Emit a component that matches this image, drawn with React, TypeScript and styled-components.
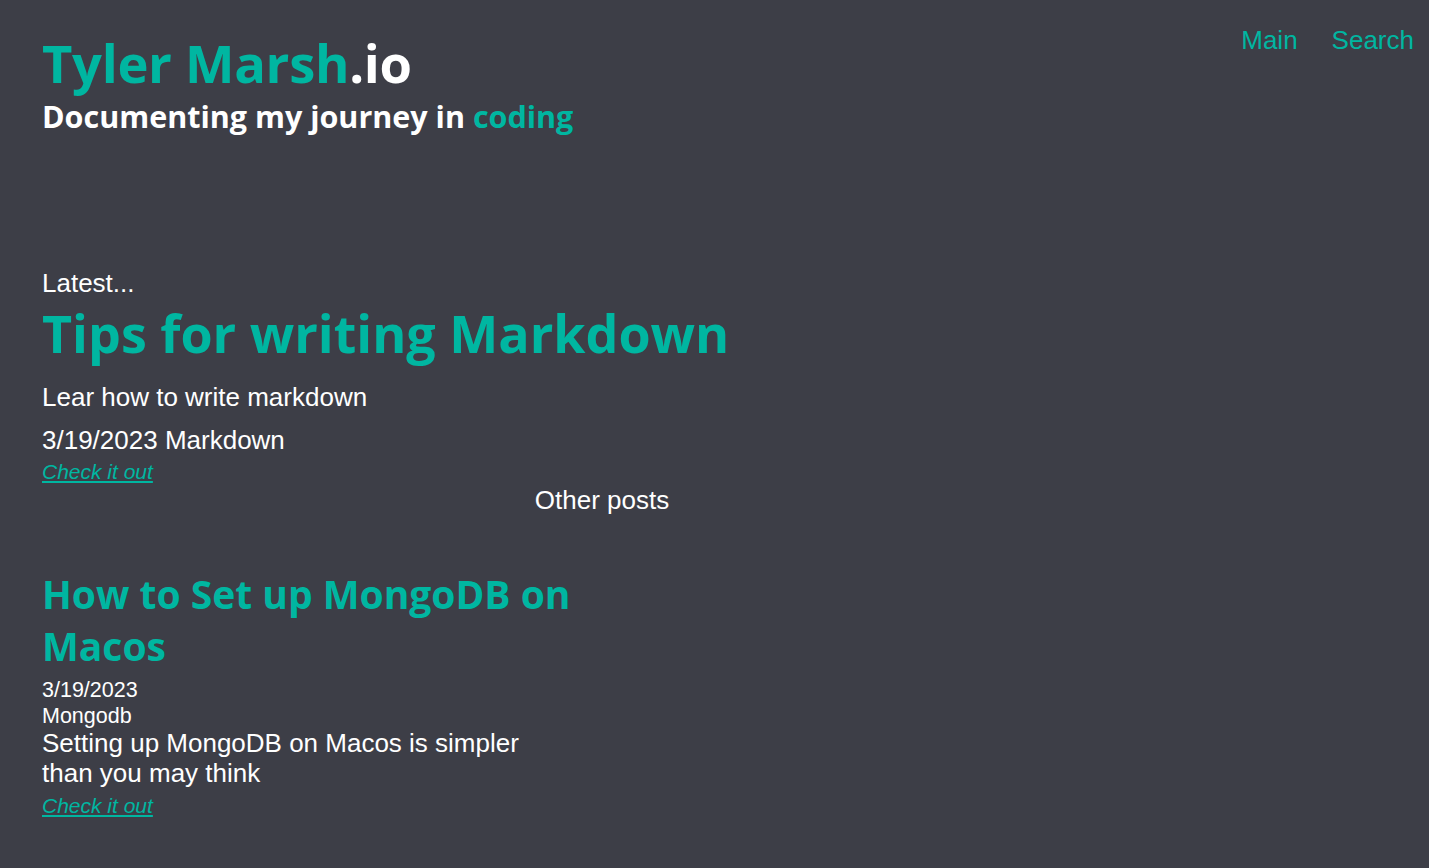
import React from "react";
import styled, { createGlobalStyle } from "styled-components";

const teal = "#00b6a1";

const GlobalStyle = createGlobalStyle`
  html, body {
    margin: 0;
    padding: 0;
    background: #3d3e47;
    min-height: 100%;
  }
  body {
    font-family: "Liberation Sans", Arial, sans-serif;
    color: #ffffff;
  }
`;

const Page = styled.div`
  min-height: 868px;
  background: #3d3e47;
`;

const Header = styled.header`
  display: flex;
  justify-content: space-between;
  align-items: flex-start;
  padding: 25px 15px 0 42px;
`;

const Brand = styled.div`
  padding-top: 8px;
  font-family: "Open Sans", "Noto Sans", sans-serif;
  font-weight: 700;
`;

const SiteTitle = styled.h1`
  margin: 0;
  font-size: 52.5px;
  line-height: 60px;
  color: #ffffff;
  letter-spacing: -0.3px;
`;

const Accent = styled.span`
  color: ${teal};
`;

const Tagline = styled.h2`
  margin: 5px 0 0;
  font-size: 30.5px;
  line-height: 36px;
  color: #ffffff;
`;

const Nav = styled.nav`
  display: flex;
  gap: 34px;
`;

const NavLink = styled.a`
  font-size: 26px;
  line-height: 30px;
  color: ${teal};
  text-decoration: none;
`;

const Main = styled.main`
  width: 1120px;
  padding: 0 42px;
  margin-top: 135px;
`;

const Label = styled.p`
  margin: 0;
  font-size: 26px;
  line-height: 28px;
`;

const FeaturedTitle = styled.h2`
  margin: 6px 0 0;
  font-family: "Open Sans", "Noto Sans", sans-serif;
  font-weight: 700;
  font-size: 52px;
  line-height: 60px;
  color: ${teal};
`;

const Text = styled.p<{ $gap?: number }>`
  margin: ${(p) => p.$gap ?? 0}px 0 0;
  font-size: 26px;
  line-height: 30px;
`;

const MoreLink = styled.a<{ $gap?: number }>`
  display: inline-block;
  margin-top: ${(p) => p.$gap ?? 0}px;
  font-size: 21px;
  line-height: 24px;
  font-style: italic;
  color: ${teal};
  text-decoration: underline;
  text-underline-offset: 2px;
`;

const SectionTitle = styled.h3`
  margin: 1px 0 0;
  text-align: center;
  font-weight: 400;
  font-size: 26px;
  line-height: 30px;
`;

const PostGrid = styled.div`
  display: grid;
  grid-template-columns: 532px;
  margin-top: 53px;
`;

const Card = styled.article`
  display: flex;
  flex-direction: column;
  align-items: flex-start;
`;

const CardTitle = styled.h2`
  margin: 0;
  font-family: "Open Sans", "Noto Sans", sans-serif;
  font-weight: 700;
  font-size: 39px;
  line-height: 52px;
  color: ${teal};
`;

const Meta = styled.p<{ $gap?: number }>`
  margin: ${(p) => p.$gap ?? 0}px 0 0;
  font-size: 21.5px;
  line-height: 25.5px;
`;

const Summary = styled.p`
  margin: 0;
  font-size: 26px;
  line-height: 29.5px;
`;

interface Post {
  title: string;
  date: string;
  tag: string;
  summary: string;
}

const posts: Post[] = [
  {
    title: "How to Set up MongoDB on Macos",
    date: "3/19/2023",
    tag: "Mongodb",
    summary: "Setting up MongoDB on Macos is simpler than you may think",
  },
];

export default function App() {
  return (
    <Page>
      <GlobalStyle />
      <Header>
        <Brand>
          <SiteTitle>
            <Accent>Tyler Marsh</Accent>.io
          </SiteTitle>
          <Tagline>
            Documenting my journey in <Accent>coding</Accent>
          </Tagline>
        </Brand>
        <Nav>
          <NavLink href="#">Main</NavLink>
          <NavLink href="#">Search</NavLink>
        </Nav>
      </Header>
      <Main>
        <Label>Latest...</Label>
        <FeaturedTitle>Tips for writing Markdown</FeaturedTitle>
        <Text $gap={19}>Lear how to write markdown</Text>
        <Text $gap={13}>3/19/2023 Markdown</Text>
        <MoreLink href="#" $gap={5}>
          Check it out
        </MoreLink>
        <SectionTitle>Other posts</SectionTitle>
        <PostGrid>
          {posts.map((post, index) => (
            <Card key={`post-card-${index}`}>
              <CardTitle>{post.title}</CardTitle>
              <Meta $gap={6}>{post.date}</Meta>
              <Meta>{post.tag}</Meta>
              <Summary>{post.summary}</Summary>
              <MoreLink href="#" $gap={6}>
                Check it out
              </MoreLink>
            </Card>
          ))}
        </PostGrid>
      </Main>
    </Page>
  );
}
